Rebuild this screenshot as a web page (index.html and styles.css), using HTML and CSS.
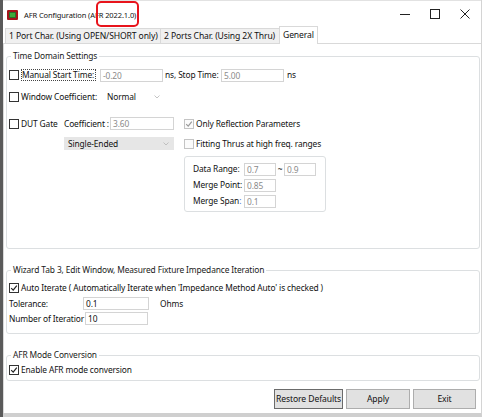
FILE: index.html
```html
<!DOCTYPE html>
<html>
<head>
<meta charset="utf-8">
<link rel="stylesheet" href="styles.css">
</head>
<body>
<div class="screen">
  <div class="edge"></div>
  <div class="win">
    <div class="titlebar">
      <span class="appicon"></span>
      <span class="title">AFR Configuration (AFR 2022.1.0)</span>
      <div class="controls">
        <svg class="ctl" width="30" height="16" viewBox="0 0 30 16"><line x1="10" y1="8.5" x2="20" y2="8.5" stroke="#222" stroke-width="1"/></svg>
        <svg class="ctl" width="30" height="16" viewBox="0 0 30 16"><rect x="10.5" y="3.5" width="9" height="9" fill="none" stroke="#222" stroke-width="1"/></svg>
        <svg class="ctl" width="30" height="16" viewBox="0 0 30 16"><path d="M10.5 3.5 L19.5 12.5 M19.5 3.5 L10.5 12.5" stroke="#222" stroke-width="1"/></svg>
      </div>
      <div class="annot"></div>
    </div>
    <div class="tabs">
      <div class="tab t1">1 Port Char. (Using OPEN/SHORT only)</div>
      <div class="tab t2">2 Ports Char. (Using 2X Thru)</div>
      <div class="tab sel">General</div>
    </div>
    <div class="pane">
      <fieldset class="grp g1">
        <legend>Time Domain Settings</legend>
        <div class="row r1">
          <span class="cb"></span>
          <span class="lbl focus w-mst">Manual Start Time:</span>
          <span class="inp dis w-start">-0.20</span>
          <span class="lbl w-stop">ns, Stop Time:</span>
          <span class="inp dis w-stopin">5.00</span>
          <span class="lbl">ns</span>
        </div>
        <div class="row r2">
          <span class="cb"></span>
          <span class="lbl w-wc">Window Coefficient:</span>
          <span class="sel-box w-norm">Normal<svg class="chev" width="6" height="4" viewBox="0 0 6 4"><path d="M0.5 0.5 L3 3 L5.5 0.5" fill="none" stroke="#b5b5b5" stroke-width="0.8"/></svg></span>
        </div>
        <div class="split">
          <div class="leftcol">
            <div class="row r3">
              <span class="cb"></span>
              <span class="lbl w-dut">DUT Gate</span>
              <span class="lbl w-coef">Coefficient :</span>
              <span class="inp dis w-coefin">3.60</span>
            </div>
            <div class="row r4">
              <span class="sel-box gray w-se">Single-Ended<svg class="chev" width="6" height="4" viewBox="0 0 6 4"><path d="M0.5 0.5 L3 3 L5.5 0.5" fill="none" stroke="#b5b5b5" stroke-width="0.8"/></svg></span>
            </div>
          </div>
          <div class="rightcol">
            <div class="row r3">
              <span class="cb dis checked"><svg width="8" height="8" viewBox="0 0 8 8"><path d="M1.2 4.2 L3.2 6.2 L6.8 1.6" fill="none" stroke="#9a9a9a" stroke-width="1.2"/></svg></span>
              <span class="lbl">Only Reflection Parameters</span>
            </div>
            <div class="row r4">
              <span class="cb dis"></span>
              <span class="lbl">Fitting Thrus at high freq. ranges</span>
            </div>
            <div class="subbox">
              <div class="srow">
                <span class="lbl slbl">Data Range:</span>
                <span class="inp dis sm">0.7</span>
                <span class="lbl tilde">~</span>
                <span class="inp dis sm">0.9</span>
              </div>
              <div class="srow">
                <span class="lbl slbl">Merge Point:</span>
                <span class="inp dis sm">0.85</span>
              </div>
              <div class="srow">
                <span class="lbl slbl">Merge Span<span class="blue">:</span></span>
                <span class="inp dis sm">0.1</span>
              </div>
            </div>
          </div>
        </div>
      </fieldset>

      <fieldset class="grp g2">
        <legend>Wizard Tab 3, Edit Window, Measured Fixture Impedance Iteration</legend>
        <div class="row">
          <span class="cb checked"><svg width="8" height="8" viewBox="0 0 8 8"><path d="M1.2 4.2 L3.2 6.2 L6.8 1.6" fill="none" stroke="#222" stroke-width="1.2"/></svg></span>
          <span class="lbl">Auto Iterate ( Automatically Iterate when 'Impedance Method Auto' is checked )</span>
        </div>
        <div class="row r-tol">
          <span class="lbl w-tol">Tolerance:</span>
          <span class="inp w-tolin">0.1</span>
          <span class="lbl ohms">Ohms</span>
        </div>
        <div class="row r-num">
          <span class="lbl w-num">Number of Iteratior</span>
          <span class="inp w-numin">10</span>
        </div>
      </fieldset>

      <fieldset class="grp g3">
        <legend>AFR Mode Conversion</legend>
        <div class="row">
          <span class="cb checked"><svg width="8" height="8" viewBox="0 0 8 8"><path d="M1.2 4.2 L3.2 6.2 L6.8 1.6" fill="none" stroke="#222" stroke-width="1.2"/></svg></span>
          <span class="lbl">Enable AFR mode conversion</span>
        </div>
      </fieldset>

      <div class="buttons">
        <button class="btn def w-rd">Restore Defaults</button>
        <button class="btn w-ap">Apply</button>
        <button class="btn w-ex">Exit</button>
      </div>
    </div>
  </div>
</div>
</body>
</html>
```

FILE: styles.css
```css
* { box-sizing: border-box; }
html, body { margin: 0; padding: 0; }
body {
  width: 482px;
  height: 417px;
  overflow: hidden;
  background: #ffffff;
  font-family: "Noto Sans", "Open Sans", sans-serif;
  font-size: 8.4px;
  letter-spacing: -0.12px;
  color: #111;
  white-space: nowrap;
}
.screen { display: flex; width: 482px; height: 417px; }
.edge { width: 3px; background: #5a5a5a; flex: none; }
.win { flex: 1; display: flex; flex-direction: column; background: #fff; position: relative; border-bottom: 4px solid #cfcfcf; border-right: 1px solid #d4d4d4; }

.titlebar { height: 27px; display: flex; align-items: center; padding-left: 4px; position: relative; flex: none; border-top: 1px solid #e2e2e2; }
.appicon { width: 11px; height: 10px; background: #3daa3a; border: 2px solid #a3141a; border-radius: 1px; margin-right: 6px; margin-top: 1px; box-shadow: inset 0 0 0 1px #2b6e2a; }
.title { font-size: 7.5px; letter-spacing: -0.1px; color: #111; margin-top: 1px; }
.controls { margin-left: auto; display: flex; gap: 0; margin-right: 1px; }
.annot { position: absolute; left: 93px; top: 0; width: 43px; height: 26px; border: 2.5px solid #e8141c; border-radius: 5px; }

.tabs { height: 16px; display: flex; align-items: flex-end; padding-left: 2px; flex: none; position: relative; z-index: 1; }
.tab { height: 15px; line-height: 14px; padding: 0 3px; background: #f0f0f0; border: 1px solid #d9d9d9; border-bottom: none; margin-right: -1px; font-size: 8.6px; }
.t1 { width: 156px; }
.t2 { width: 120px; }
.tab.sel { background: #fff; height: 18px; line-height: 16px; margin-bottom: -1px; width: 39px; }

.pane { flex: 1; border: 1px solid #d9d9d9; border-right: none; border-bottom: none; margin-left: 0; padding: 6px 1px 0 2px; display: flex; flex-direction: column; }

.grp { border: 1px solid #dcdfe1; border-radius: 3px; margin: 0; padding: 0 0 0 2px; min-width: 0; }
.grp legend { padding: 0 2px; margin-left: 2px; line-height: 12px; color: #1a1a1a; }
.g1 { height: 199px; padding-top: 3px; }
.g2 { height: 70px; margin-top: 15px; padding-top: 4px; }
.g3 { height: 32px; margin-top: 15px; padding-top: 1px; }

.row { display: flex; align-items: center; height: 15px; }
.lbl { line-height: 12px; }
.cb { width: 10px; height: 10px; border: 1px solid #333; background: #fff; flex: none; margin-right: 2px; display: flex; align-items: center; justify-content: center; }
.cb.dis { border-color: #c4c4c4; background: #fbfbfb; }
.inp { height: 13px; border: 1px solid #d4d4d4; line-height: 11px; padding-left: 2px; background: #fff; color: #111; flex: none; }
.inp.dis { color: #8a8a8a; }
.sel-box { height: 13px; line-height: 12px; display: flex; align-items: center; padding-left: 2px; position: relative; flex: none; }
.sel-box .chev { position: absolute; right: 5px; top: 5px; }
.sel-box.gray { background: #e6e6e6; padding-left: 4px; }

.r1 { margin-top: 2px; height: 16px; }
.w-mst { width: 75px; outline: 1px dotted #444; outline-offset: -1px; padding-left: 1px; margin-right: 4px; flex: none; }
.w-start { width: 63px; margin-right: 2px; }
.w-stop { width: 56px; flex: none; }
.w-stopin { width: 63px; margin-right: 3px; }
.r2 { margin-top: 6px; }
.w-wc { width: 84px; flex: none; }
.w-norm { width: 60px; }

.split { display: flex; margin-top: 12px; }
.leftcol { width: 175px; flex: none; }
.rightcol { flex: none; }
.w-dut { width: 43px; flex: none; }
.w-coef { width: 46px; flex: none; }
.w-coefin { width: 64px; }
.leftcol .r4 { margin-top: 5px; padding-left: 55px; }
.rightcol .r4 { margin-top: 5px; }
.w-se { width: 110px; }

.subbox { margin-top: 5px; width: 142px; height: 56px; border: 1px solid #dcdfe1; border-radius: 3px; padding: 4px 0 0 8px; }
.srow { display: flex; align-items: center; height: 16px; }
.slbl { width: 51px; flex: none; }
.inp.sm { width: 32px; }
.tilde { width: 8px; text-align: center; flex: none; }
.blue { color: #3a6bd1; }

.r-tol { margin-top: 1px; }
.w-tol { width: 74px; flex: none; }
.w-tolin { width: 66px; }
.ohms { margin-left: 11px; }
.w-num { width: 76px; overflow: hidden; flex: none; }
.w-numin { width: 63px; }

.buttons { display: flex; justify-content: flex-end; gap: 3px; margin-top: 8px; padding-right: 4px; }
.btn { font-family: inherit; font-size: 8.6px; letter-spacing: -0.1px; height: 20px; background: #e1e1e1; border: 1px solid #adadad; color: #111; padding: 0; white-space: nowrap; }
.btn.def { border-color: #6b6b6b; }
.w-rd { width: 69px; }
.w-ap { width: 64px; }
.w-ex { width: 63px; }
```
